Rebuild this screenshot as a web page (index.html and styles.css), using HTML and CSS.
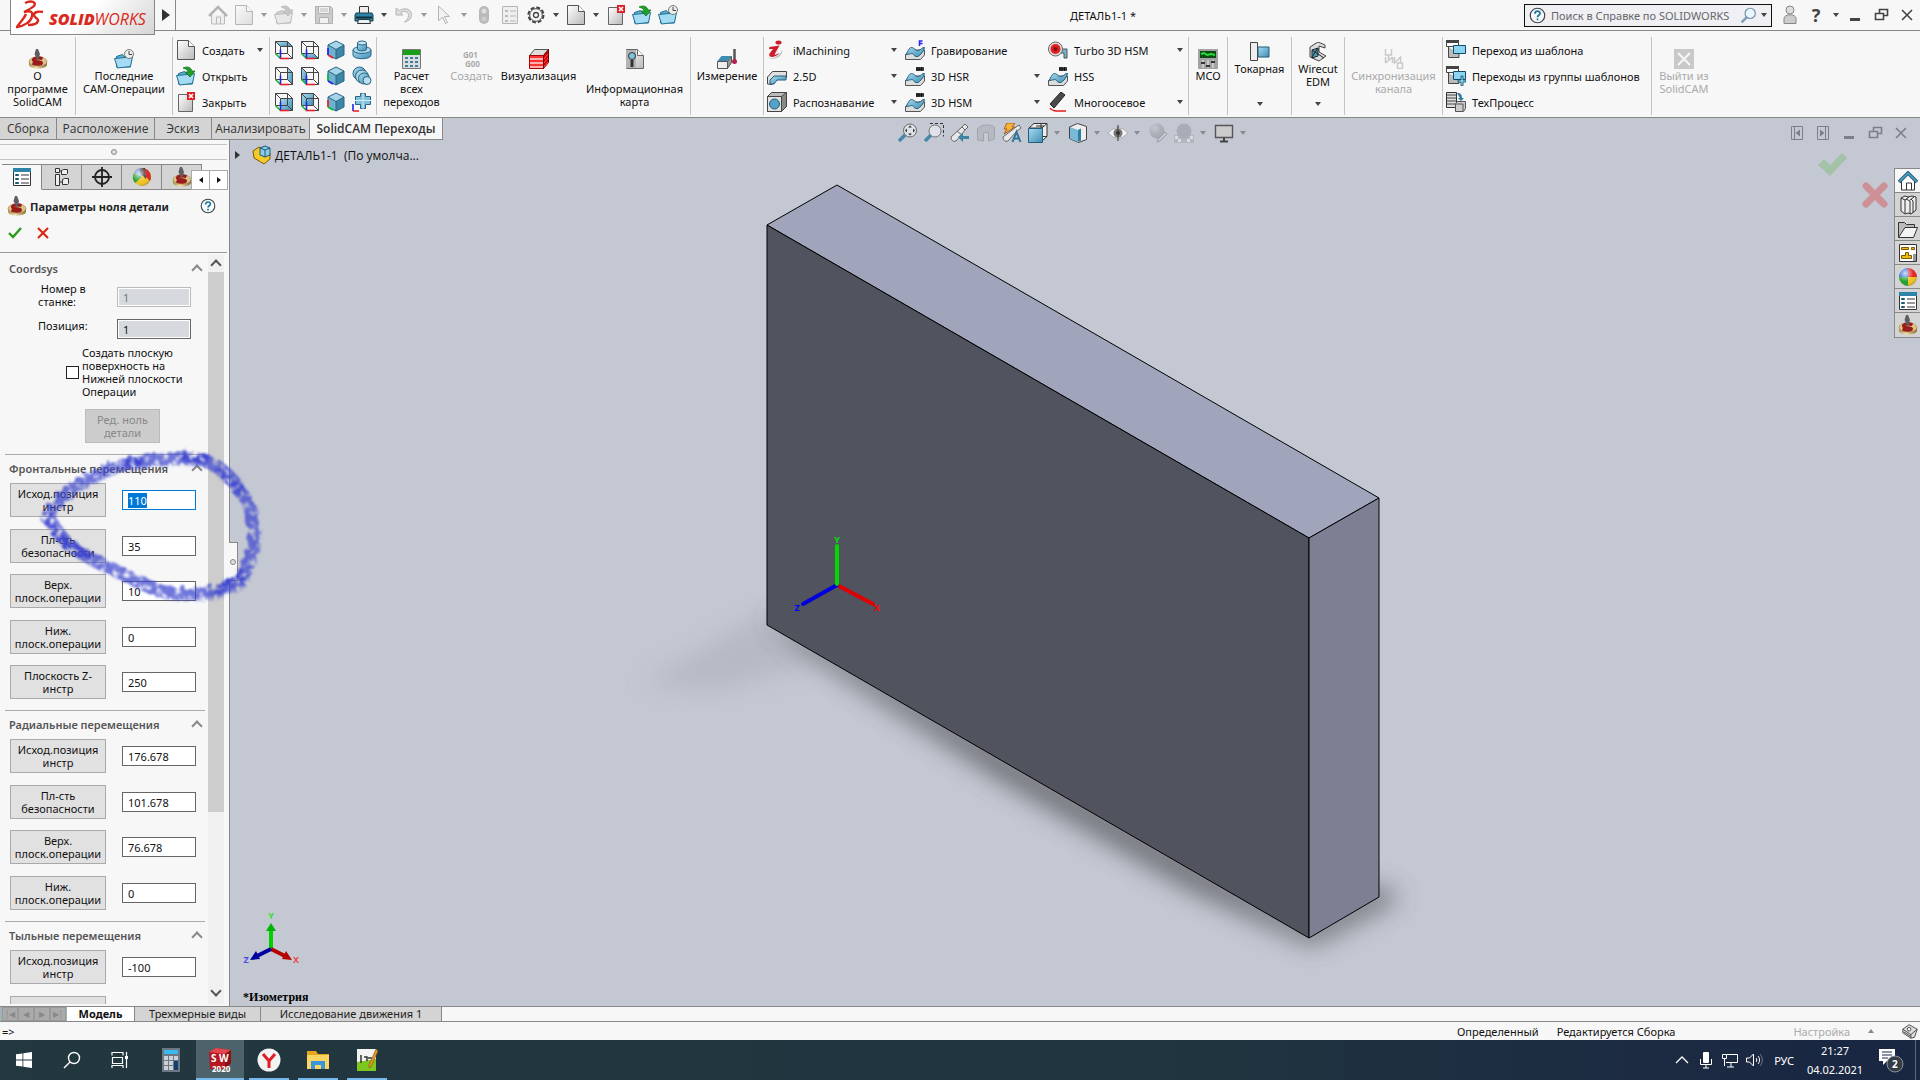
FILE: index.html
```html
<!DOCTYPE html>
<html lang="ru">
<head>
    <meta charset="UTF-8">
    <meta name="viewport" content="width=device-width, initial-scale=1.0">
    <title>ДЕТАЛЬ1-1 *</title>
    <link rel="stylesheet" href="styles.css">
</head>
<body>
    <!-- icon set, every symbol is 20x20 -->
    <svg class="defs" width="0" height="0" aria-hidden="true">
        <defs>
            <linearGradient id="blue" x1="0" y1="0" x2="1" y2="1"><stop offset="0" stop-color="#a8dbf0"/><stop offset="1" stop-color="#3d8db3"/></linearGradient>
            <linearGradient id="grey" x1="0" y1="0" x2="1" y2="1"><stop offset="0" stop-color="#fff"/><stop offset="1" stop-color="#b9b9b9"/></linearGradient>
            <linearGradient id="gold" x1="0" y1="0" x2="1" y2="0"><stop offset="0" stop-color="#a98d4c"/><stop offset=".4" stop-color="#f3e3b0"/><stop offset="1" stop-color="#8a6c33"/></linearGradient>
            <radialGradient id="shine" cx=".35" cy=".3" r=".8"><stop offset="0" stop-color="#fff" stop-opacity=".8"/><stop offset=".6" stop-color="#fff" stop-opacity="0"/><stop offset="1" stop-color="#000" stop-opacity=".35"/></radialGradient>
        </defs>
        <symbol id="i-doc" viewBox="0 0 20 20"><path d="M1.500.5h11l6 6v13h-17z" fill="url(#grey)" stroke="#555"/><path d="M12.500.5v6h6" fill="#fff" stroke="#555"/></symbol>
        <symbol id="i-docx" viewBox="0 0 20 20"><path d="M2.500 2.500h14v17h-14z" fill="url(#grey)" stroke="#666"/><path d="M11 0h8v8h-8z" fill="#e01b24"/><path d="M13 2l4 4m0-4l-4 4" stroke="#fff" stroke-width="1.600"/></symbol>
        <symbol id="i-folder" viewBox="0 0 20 20"><path d="M2.500 18V7.500l6-2 1.500 2h6.500V18z" fill="#5fb0d2" stroke="#1f6f93"/><path d="M.5 9.500l16-1.500 2-.5-2 10-13 1.500z" fill="#a5dcf4" stroke="#1f6f93"/></symbol>
        <symbol id="i-open" viewBox="0 0 20 20"><use href="#i-folder"/><path d="M7 2c4-2 8-1 9 3h3l-5 6-5-5h3c0-2-2-3-5-4z" fill="#1fa02a" stroke="#116b18" stroke-width=".7"/></symbol>
        <symbol id="i-recent" viewBox="0 0 20 20"><use href="#i-folder"/><circle cx="15" cy="5" r="4.500" fill="#eee" stroke="#777"/><path d="M15 2v3.500h3" fill="none" stroke="#444"/></symbol>
        <symbol id="i-home" viewBox="0 0 20 20"><path d="M3.500 10v9h13v-9" fill="#eee" stroke="#bbb"/><path d="M1 11l9-9 9 9" fill="none" stroke="#b4b4b4" stroke-width="2.500"/><path d="M8.500 19v-7h4v7" fill="none" stroke="#bbb"/></symbol>
        <symbol id="i-save" viewBox="0 0 20 20"><path d="M1.500 1.500h15l2 2v15h-17z" fill="#ccc" stroke="#b0b0b0"/><path d="M4.500 1.500h11v7h-11zM5.500 12.500h9v6h-9z" fill="#f2f2f2" stroke="#b0b0b0"/><path d="M6 4h8M6 6h8" stroke="#bbb"/></symbol>
        <symbol id="i-print" viewBox="0 0 20 20"><path d="M5.500 8V1.500h9V8" fill="#eee" stroke="#333"/><path d="M2 8h16l1 2v6H1v-6z" fill="#2e83a8" stroke="#163f52"/><path d="M2 12.500h16" stroke="#0f2e3d" stroke-width="2"/><path d="M4.500 14.500h11l1 4h-13z" fill="#e6f3f8" stroke="#333"/></symbol>
        <symbol id="i-undo" viewBox="0 0 20 20"><path d="M2 3v7h7L6.500 7.500c4-2 8-1 8 3 0 3-2 5-4 6.500 5-1 7-4 7-7.500 0-5.500-7-7.500-12-4z" fill="#ddd" stroke="#b5b5b5"/></symbol>
        <symbol id="i-pointer" viewBox="0 0 20 20"><path d="M4.500 1v15l4-4 3 6.500 2-1-3-6h5z" fill="#f3f3f3" stroke="#b5b5b5"/></symbol>
        <symbol id="i-light" viewBox="0 0 20 20"><rect x="5" y="1" width="10" height="18" rx="5" fill="#b9b9b9"/><circle cx="10" cy="6" r="2.500" fill="#ddd"/><circle cx="10" cy="14" r="2.500" fill="#ccc"/></symbol>
        <symbol id="i-props" viewBox="0 0 20 20"><path d="M2.500 1.500h15v17h-15z" fill="#efefef" stroke="#b5b5b5"/><path d="M5 5h3v2H5zM5 10h3v2H5zM5 15h3v2H5z" fill="#bbb"/><path d="M10 6h6M10 11h6M10 16h6" stroke="#b5b5b5"/></symbol>
        <symbol id="i-gear" viewBox="0 0 20 20"><circle cx="10" cy="10" r="7.500" fill="none" stroke="#444" stroke-width="2" stroke-dasharray="3.900 2"/><circle cx="10" cy="10" r="6.300" fill="#f7f7f7" stroke="#444"/><circle cx="10" cy="10" r="2.500" fill="none" stroke="#444" stroke-width="1.300"/></symbol>
        <symbol id="i-help" viewBox="0 0 20 20"><circle cx="10" cy="10" r="8.500" fill="#f4fafc" stroke="#444" stroke-width="1.400"/><path d="M7 8c0-4 6-4 6-.5 0 2.200-3 2.200-3 4.500M10 13.500v2" fill="none" stroke="#1c7396" stroke-width="2"/></symbol>
        <symbol id="i-lens" viewBox="0 0 20 20"><path d="M8 12l-6 6" stroke="#7d9fb8" stroke-width="3"/><circle cx="12" cy="7.500" r="6" fill="#eaf6fd" stroke="#7393a9" stroke-width="1.400"/></symbol>
        <symbol id="i-user" viewBox="0 0 20 20"><circle cx="10" cy="5" r="4" fill="#ddd" stroke="#888"/><path d="M4 18.500v-5c0-5 12-5 12 0v5z" fill="#ccc" stroke="#888"/></symbol>
        <symbol id="i-cam" viewBox="0 0 20 20"><path d="M1 12.500v3c0 5.500 18 5.500 18 0v-3z" fill="url(#gold)"/><ellipse cx="10" cy="12.500" rx="9" ry="4.700" fill="#dcc489" stroke="#9c8144" stroke-width=".6"/><path d="M14.500 9.700c-5-2-11 .3-8.500 2 2 1.500 7 .7 7.500 2 0 1.800-5 2-9 .3" fill="none" stroke="#9b1c1c" stroke-width="3"/><path d="M8 0h2l2 5-1.500 5L10 12 7.500 7 6.500 5z" fill="#5b5f63"/></symbol>
        <symbol id="i-wire" viewBox="0 0 20 20"><path d="M1.500 1.500h12v12h-12zM6.500 6.500h12v12h-12zM1.500 1.500l5 5M13.500 1.500l5 5M13.500 13.500l5 5" fill="none" stroke="#444"/><path d="M1.500 13.500l5 5" stroke="#18b22c" stroke-width="1.600"/><path d="M6.500 18.500v-9" stroke="#2222e6" stroke-width="1.600"/><path d="M6 18.500h9" stroke="#e6202c" stroke-width="1.600"/></symbol>
        <symbol id="i-cube" viewBox="0 0 20 20"><path d="M10 1l8 4-8 4.500L2 5z" fill="#a6d5e8"/><path d="M2 5l8 4.500V19l-8-4z" fill="#6fb2cf"/><path d="M18 5l-8 4.500V19l8-4z" fill="#3c86a8"/><path d="M10 1l8 4v10l-8 4-8-4V5zM2 5l8 4.500L18 5M10 9.500V19" fill="none" stroke="#2a6582"/></symbol>
        <symbol id="i-boss" viewBox="0 0 20 20"><path d="M1 10v5c0 5 18 5 18 0v-5z" fill="url(#blue)" stroke="#2a6582"/><ellipse cx="10" cy="10" rx="9" ry="3.500" fill="#a6d5e8" stroke="#2a6582"/><path d="M5.500 3v6c0 2.500 9 2.500 9 0V3z" fill="url(#blue)" stroke="#2a6582"/><ellipse cx="10" cy="3" rx="4.500" ry="2" fill="#c4e6f3" stroke="#2a6582"/></symbol>
        <symbol id="i-disc" viewBox="0 0 20 20"><circle cx="7.500" cy="7.500" r="6.500" fill="url(#blue)" stroke="#2a6582"/><circle cx="10" cy="10.500" r="6.500" fill="#a6d5e8" stroke="#2a6582"/><circle cx="12" cy="12.500" r="5.500" fill="url(#blue)" stroke="#2a6582"/><circle cx="15" cy="14.500" r="4" fill="#b8e0ef" stroke="#2a6582"/></symbol>
        <symbol id="i-plus" viewBox="0 0 20 20"><path d="M3.500 4.500h5v-3h5v3h5v8h-5v4h-5v-4h-5z" fill="#7fc0da" stroke="#2a6582"/><path d="M11 1v16M3 8.500h16" stroke="#d8eff7"/><path d="M1 12v7" stroke="#22e" stroke-width="1.600"/><path d="M1 19h6" stroke="#e22" stroke-width="1.600"/></symbol>
        <symbol id="i-calc" viewBox="0 0 20 20"><path d="M.5.5h18v19H.5z" fill="#ddd" stroke="#777"/><path d="M1 1h17v5H1z" fill="#17a017"/><path d="M3 8h3v2H3zM8 8h3v2H8zM13 8h3v2h-3zM3 12h3v2H3zM8 12h3v2H8zM13 12h3v2h-3zM3 16h3v2H3zM8 16h3v2H8zM13 16h3v2h-3z" fill="#3d7f9f"/></symbol>
        <symbol id="i-viz" viewBox="0 0 20 20"><path d="M.5 6.500l5-6h14l-5 6z" fill="#ddd" stroke="#555"/><path d="M.5 6.500h14v13H.5z" fill="#f33" stroke="#a00"/><path d="M14.500 6.500l5-6v13l-5 6z" fill="#c00" stroke="#700"/><path d="M1 10h13M1 14h13M1 18h13" stroke="#ffd9d9" stroke-width="1.500"/><path d="M15 10l4-5M15 14l4-5M15 18l4-5" stroke="#f55"/></symbol>
        <symbol id="i-info" viewBox="0 0 20 20"><path d="M1.500.5h11l6 6v13h-17z" fill="url(#grey)" stroke="#666"/><path d="M1 1h10v18H1z" fill="#b4b4b4"/><path d="M12.500.5v6h6" fill="#fff" stroke="#666"/><circle cx="7" cy="7" r="3.500" fill="#7fc2df" stroke="#333"/><path d="M7 11v7" stroke="#333" stroke-width="3"/></symbol>
        <symbol id="i-measure" viewBox="0 0 20 20"><path d="M.5 12.500h10v7H.5z" fill="#eee" stroke="#555"/><path d="M.5 12l4-5h10l-4 5z" fill="#3d8db3"/><path d="M10.500 12.500l4-5v6l-4 6z" fill="#999" stroke="#555"/><path d="M17.500 0v11" stroke="#555" stroke-width="2.500"/><circle cx="17.500" cy="12.500" r="2.500" fill="#b2204e"/></symbol>
        <symbol id="i-imach" viewBox="0 0 20 20"><path d="M0 18.500c7 1 13-3 15.500-9 0 7-7 11-15.500 9z" fill="#bbb"/><ellipse cx="11.500" cy="2.500" rx="3" ry="2" fill="#cc1d2c"/><path d="M2.500 7l10-1.500-5 9c1 .5 3-.5 5-1.500-4 5-12 5.500-10 .5L6 9H2z" fill="#cc1d2c"/></symbol>
        <symbol id="i-slot" viewBox="0 0 20 20"><path d="M.5 18V11l5-5.500h14v6l-3 2H8.500L5 18.500z" fill="#e1e1e1" stroke="#444"/><path d="M3 18v-4l4-4h12v4h-9l-3 4z" fill="url(#blue)" stroke="#235d79"/></symbol>
        <symbol id="i-recog" viewBox="0 0 20 20"><path d="M.5 4.500l4-4h15v14l-5 5H.5z" fill="#bbb" stroke="#444"/><path d="M.5 4.500h14v15H.5z" fill="#e2e2e2" stroke="#444"/><path d="M14.500 4.500l5-4v14l-5 5z" fill="#888" stroke="#444"/><circle cx="7.500" cy="12" r="5" fill="#57a3c6" stroke="#215a76"/></symbol>
        <symbol id="i-surf" viewBox="0 0 20 20"><path d="M.5 15l5-5h14v5l-4 4.500H.5z" fill="#ddd" stroke="#555"/><path d="M.5 14.500c2-1 3-7 6-7s4 4 7 3 3-3 6-3c-1 4-3 6-5 8s-5 1-6-1-4 0-8 0z" fill="url(#blue)" stroke="#235d79"/></symbol>
        <symbol id="i-surft" viewBox="0 0 20 20"><use href="#i-surf"/><path d="M11 1h8v4h-8z" fill="#555"/><path d="M12 1v4M14 1v4M16.500 1v4M11 3h8" stroke="#111"/></symbol>
        <symbol id="i-surfe" viewBox="0 0 20 20"><use href="#i-surf"/><path d="M14.500 6V1h3M14.500 3.500h3" fill="none" stroke="#22f" stroke-width="1.500"/></symbol>
        <symbol id="i-turbo" viewBox="0 0 20 20"><path d="M14 9h5v9h-3v-5h-4z" fill="#6fb3d0" stroke="#555"/><circle cx="7.500" cy="9" r="7" fill="#ddd" stroke="#666"/><circle cx="7.500" cy="9" r="5" fill="#e02020"/><circle cx="7.500" cy="9" r="2" fill="#801010"/></symbol>
        <symbol id="i-multi" viewBox="0 0 20 20"><path d="M2 12L13 0l4 3L6 16z" fill="#4a4a4a" stroke="#222"/><path d="M2 16c2 4 8 3 16 3" fill="none" stroke="#e01c1c" stroke-width="1.500"/></symbol>
        <symbol id="i-mco" viewBox="0 0 20 20"><path d="M0 0h20v20H0z" fill="#a3a3a3"/><path d="M2 2h16v7H2z" fill="#0d4a16"/><path d="M3 5l3-1 3 2 4-1 4 1" fill="none" stroke="#28e03a" stroke-width="2"/><path d="M5 11v8M10 11v8M15 11v8" stroke="#eee"/><path d="M3 14h4M8 17h4M13 13h4" stroke="#333" stroke-width="2"/></symbol>
        <symbol id="i-turn" viewBox="0 0 20 20"><path d="M.5.5h7v18h-7z" fill="#eee" stroke="#444"/><path d="M8 5h11v10H8z" fill="url(#blue)" stroke="#235d79"/></symbol>
        <symbol id="i-edm" viewBox="0 0 20 20"><path d="M2 5l8-5 7 3v3l-6-2v6l7 4-7 5-9-4z" fill="#ddd" stroke="#444"/><path d="M4 8l6-2v8l-6 2z" fill="#4d9cc0" stroke="#222"/><path d="M4 8l12 8M10 6l-6 9" stroke="#222"/></symbol>
        <symbol id="i-sync" viewBox="0 0 20 20"><path d="M1.500 0v6h6V0M4.500 6v6M1.500 8v6M8.500 8v6M1.500 14l7-6M10.500 8v6l6-6v6M13.500 14v5.500h5v-5.500z" fill="none" stroke="#c9c9c9" stroke-width="1.500"/></symbol>
        <symbol id="i-tpl" viewBox="0 0 20 20"><path d="M.5.5h12v6H.5z" fill="#fff" stroke="#444"/><path d="M0 0h13v3H0z" fill="#444"/><path d="M2.500 7v10.500H13v-4" fill="#bbb" stroke="#444"/><path d="M7.500 5.500h12v8h-12z" fill="#8bd4f2" stroke="#124c68"/></symbol>
        <symbol id="i-tpl2" viewBox="0 0 20 20"><use href="#i-tpl"/><path d="M15 10h2v4h3v2h-3v4h-2v-4h-3v-2h3z" fill="#8bd4f2" stroke="#124c68" stroke-width=".8"/></symbol>
        <symbol id="i-tech" viewBox="0 0 20 20"><path d="M.5.5h10v15H.5z" fill="#ddd" stroke="#333"/><path d="M1 3h9M1 6h9M1 9h9M1 12h9" stroke="#444"/><path d="M11 1c4 0 5 2 5 5h2l-3 3-3-3h2" fill="#2e7d9f"/><path d="M9.500 11.500l2-2h8v7l-2 3h-8z" fill="#ccc" stroke="#555"/><path d="M10 12h7v7" fill="none" stroke="#555"/></symbol>
        <symbol id="i-exit" viewBox="0 0 20 20"><path d="M0 0h20v20H0z" fill="#c9c9c9"/><path d="M4 4l12 12M16 4L4 16" stroke="#f7f7f7" stroke-width="2"/></symbol>
        <!-- view toolbar -->
        <symbol id="i-fit" viewBox="0 0 20 20"><path d="M7 12l-6 6" stroke="#4788a8" stroke-width="3.500"/><circle cx="12" cy="7.500" r="6.500" fill="#dfe3e9" stroke="#666"/><path d="M12 2.500l2 2h-4zM12 12.500l2-2h-4zM7 7.500l2-2v4zM17 7.500l-2-2v4z" fill="#333"/></symbol>
        <symbol id="i-area" viewBox="0 0 20 20"><path d="M6 .5h13.500v13" fill="none" stroke="#333" stroke-dasharray="3 2"/><path d="M7 12l-6 6" stroke="#4788a8" stroke-width="3.500"/><circle cx="11" cy="8" r="6" fill="#dfe3e9" stroke="#777"/></symbol>
        <symbol id="i-prev" viewBox="0 0 20 20"><path d="M1 14L12 4l3-3 3 3-3 3-9 11c-3 1-5-1-5-4z" fill="#e8e8e8" stroke="#666"/><path d="M7 8l5 4M12 4l3 3" stroke="#666"/><path d="M8 14l5-4v3h6v3h-6v3z" fill="#3e84a5"/></symbol>
        <symbol id="i-sect" viewBox="0 0 20 20"><path d="M1.500 6c3-5 13-5 17-2v12l-6 2V9l-5 1v8l-6-1z" fill="#b5b9c2" stroke="#a0a4ad"/></symbol>
        <symbol id="i-dyn" viewBox="0 0 20 20"><path d="M1 14L14 4l3-2 2 3-4 3-9 10c-3 1-5-1-5-4z" fill="#e8e8e8" stroke="#666"/><path d="M5 0h8l-3 4h3L2 11l3-5H2z" fill="#f3b53a" stroke="#b35a12"/><path d="M10.500 19l4-10 4 10M12 15.500h5" fill="none" stroke="#2e7599" stroke-width="2"/></symbol>
        <symbol id="i-orient" viewBox="0 0 20 20"><path d="M1 5l5-4.500h13v13L14 18V5z" fill="#eee" stroke="#333"/><path d="M14 5l5-4.500M13 .5v13h6M8 3h8" fill="none" stroke="#333"/><path d="M.5 5.500h14v14H.5z" fill="url(#blue)" stroke="#235d79"/></symbol>
        <symbol id="i-style" viewBox="0 0 20 20"><path d="M1.500 4l8-3.500 9 3v13l-8 3-9-4z" fill="#eee" stroke="#444"/><path d="M2 4l8 3v12l-8-3.500z" fill="#79bbd6"/><path d="M10 7l3-1.500v12L10 19z" fill="#2e7ea3"/></symbol>
        <symbol id="i-eye" viewBox="0 0 20 20"><path d="M0 10Q10-1 20 10 10 21 0 10z" fill="#f3f3f3" stroke="#aaa"/><circle cx="10" cy="10" r="4.500" fill="#777"/><circle cx="10" cy="10" r="2" fill="#333"/><path d="M10 2v16" stroke="#333"/></symbol>
        <symbol id="i-ball" viewBox="0 0 20 20"><circle cx="9" cy="8" r="7.500" fill="#a9adb7"/><circle cx="9" cy="8" r="7.500" fill="url(#shine)" opacity=".4"/><path d="M17 9l2 2-7 7-3 1 1-3z" fill="#c4c7cf" stroke="#9a9ea8"/></symbol>
        <symbol id="i-ball2" viewBox="0 0 20 20"><path d="M0 12h20v8H0z" fill="#b4b7bf"/><path d="M1 13h3v3H1zM4 16h3v3H4zM13 16h3v3h-3zM16 13h3v3h-3z" fill="#d8dae0"/><circle cx="10" cy="8" r="7.500" fill="#a9adb7"/></symbol>
        <symbol id="i-mon" viewBox="0 0 20 20"><path d="M1.500 2.500h17v12h-17z" fill="#ccc" stroke="#555" stroke-width="1.400"/><path d="M10 15v3M6 18.500h8" stroke="#444" stroke-width="2"/></symbol>
        <!-- panel and task pane -->
        <symbol id="i-list" viewBox="0 0 20 20"><path d="M1.500 1.500h17v17h-17z" fill="#fff" stroke="#333"/><path d="M1 1h18v4H1z" fill="#2e83a8"/><path d="M3.500 7.500h3v1h-3zM3.500 11.500h3v1h-3zM3.500 15.500h3v1h-3z" fill="#8cc" stroke="#1c5877"/><path d="M9 8h8M9 12h8M9 16h8" stroke="#333"/></symbol>
        <symbol id="i-conf" viewBox="0 0 20 20"><path d="M3.500 1.500h4v4h-4zM3.500 7.500h4v11h-4zM7.500 4h3M7.500 15h5" fill="#eee" stroke="#333"/><path d="M9.500 3.500l2-1h4v4l-1 1h-5zM10.500 12.500l2-1h4v5l-1 1h-5z" fill="#eee" stroke="#333"/></symbol>
        <symbol id="i-target" viewBox="0 0 20 20"><circle cx="10" cy="10" r="7" fill="none" stroke="#222" stroke-width="1.800"/><path d="M10 0v20M0 10h20" stroke="#222" stroke-width="1.800"/></symbol>
        <symbol id="i-rgb" viewBox="0 0 20 20"><path d="M10 10V1a9 9 0 0 1 9 9z" fill="#e01f1f"/><path d="M10 10h9a9 9 0 0 1-9 9z" fill="#f1c21c"/><path d="M10 10v9a9 9 0 0 1-9-9z" fill="#1d9e28"/><path d="M10 10H1a9 9 0 0 1 9-9z" fill="#1f58cf"/><circle cx="10" cy="10" r="9" fill="url(#shine)"/></symbol>
        <symbol id="i-app" viewBox="0 0 20 20"><circle cx="10" cy="10" r="9" fill="#f1c21c"/><path d="M10 10L3 16A9 9 0 0 1 2 6z" fill="#1d9e28"/><path d="M10 10L2 6a9 9 0 0 1 8-5z" fill="#4f86d8"/><path d="M10 1a9 9 0 0 1 8 13L8 4z" fill="#d92020"/><path d="M8 2l5-1 1 11-7-7z" fill="#222"/><circle cx="10" cy="10" r="9" fill="url(#shine)"/></symbol>
        <symbol id="i-house" viewBox="0 0 20 20"><path d="M3.500 9v10h13V9" fill="#fff" stroke="#333"/><path d="M1 11l9-9 9 9" fill="none" stroke="#235d79" stroke-width="3.500"/><path d="M1.500 10.500L10 2l8.500 8.500" fill="none" stroke="#4fa3c7" stroke-width="1.500"/><path d="M8.500 19v-7h5v7" fill="none" stroke="#333"/></symbol>
        <symbol id="i-books" viewBox="0 0 20 20"><path d="M3 3l4-2 3 1 4-1 4 1v13l-5 4-3-1-3 1-4-3z" fill="#eee" stroke="#333"/><path d="M3 3l4 2v13M7 5l4-3M8 4l4 2v13M12 5l4-3M13 4l2 2v12" fill="none" stroke="#333"/></symbol>
        <symbol id="i-dir" viewBox="0 0 20 20"><path d="M.5 18V3.500h6l2 2h8V9" fill="#bbb" stroke="#333"/><path d="M.5 18.500L7 8.500h12.500l-4 10z" fill="#f3f3f3" stroke="#333"/></symbol>
        <symbol id="i-pal" viewBox="0 0 20 20"><path d="M1.500 1.500h17v17h-17z" fill="#fff" stroke="#333"/><path d="M3.500 4.500h7v2h-7zM13.500 4.500h3v2h-3zM7.500 9.500h3v3h3v3h-10v-3h4z" fill="#f1b90f" stroke="#7a5a00"/><path d="M15 11h3v7h-3z" fill="#999"/></symbol>
        <symbol id="i-part" viewBox="0 0 20 20"><path d="M1 6l6-4 4 2v6l7-2v6l-6 5L2 13z" fill="#f4c92a" stroke="#7a5a00"/><path d="M8 3l5-2 5 2v7l-5 2-5-2z" fill="#8ccbe4" stroke="#1c5877"/><path d="M8 3l5 2 5-2M13 5v7" fill="none" stroke="#1c5877"/></symbol>
        <symbol id="w-min" viewBox="0 0 20 20"><path d="M5 14.500h10" stroke="currentColor" stroke-width="3"/></symbol>
        <symbol id="w-rest" viewBox="0 0 20 20"><path d="M4.500 8.500h8v6h-8zM8.500 8V4.500h8v6H13" fill="none" stroke="currentColor" stroke-width="1.600"/></symbol>
        <symbol id="w-close" viewBox="0 0 20 20"><path d="M5 5l10 10M15 5L5 15" stroke="currentColor" stroke-width="1.600"/></symbol>
        <symbol id="w-left" viewBox="0 0 20 20"><path d="M4.500 3.500h11v13h-11zM7.500 3.500v13" fill="none" stroke="currentColor"/><path d="M13 6.500v7L8.500 10z" fill="currentColor"/></symbol>
        <symbol id="w-right" viewBox="0 0 20 20"><path d="M4.500 3.500h11v13h-11zM12.500 3.500v13" fill="none" stroke="currentColor"/><path d="M7 6.500v7l4.500-3.500z" fill="currentColor"/></symbol>
    </svg>

    <header class="titlebar">
        <div class="logo">
            <svg width="28" height="30" viewBox="0 0 28 30" aria-hidden="true"><path d="M9 3c6-3 12-1 9 3-2 2-6 4-10 6 7-2 9 0 8 4-1 6-8 10-15 11 3-5 7-8 9-13M27 12c-5-1-9 0-9 3 0 3 5 3 4 6-1 3-6 4-10 4" fill="none" stroke="#da291c" stroke-width="2.400"/></svg>
            <span><b>SOLID</b>WORKS</span>
        </div>
        <button class="logo-arrow" aria-label="Меню"></button>
        <div class="quick">
            <button class="home" aria-label="Домой"><svg class="ic"><use href="#i-home"/></svg></button>
            <button class="dd off" aria-label="Создать"><svg class="ic faded"><use href="#i-doc"/></svg><i class="caret"></i></button>
            <button class="dd off" aria-label="Открыть"><svg class="ic faded"><use href="#i-open"/></svg><i class="caret"></i></button>
            <button class="dd off" aria-label="Сохранить"><svg class="ic"><use href="#i-save"/></svg><i class="caret"></i></button>
            <button class="dd" aria-label="Печать"><svg class="ic"><use href="#i-print"/></svg><i class="caret"></i></button>
            <button class="dd off" aria-label="Отменить"><svg class="ic"><use href="#i-undo"/></svg><i class="caret"></i></button>
            <button class="dd off" aria-label="Выбрать"><svg class="ic"><use href="#i-pointer"/></svg><i class="caret"></i></button>
            <button class="home" aria-label="Перестроить"><svg class="ic"><use href="#i-light"/></svg></button>
            <button class="home" aria-label="Свойства файла"><svg class="ic"><use href="#i-props"/></svg></button>
            <button class="dd" aria-label="Параметры"><svg class="ic"><use href="#i-gear"/></svg><i class="caret"></i></button>
            <button class="dd" aria-label="Новая деталь"><svg class="ic"><use href="#i-doc"/></svg><i class="caret"></i></button>
            <button class="home" aria-label="Закрыть деталь"><svg class="ic"><use href="#i-docx"/></svg></button>
            <button class="home" aria-label="Открыть деталь"><svg class="ic"><use href="#i-open"/></svg></button>
            <button class="home" aria-label="Последние"><svg class="ic"><use href="#i-recent"/></svg></button>
        </div>
        <div class="doc-name">ДЕТАЛЬ1-1 *</div>
        <div class="search">
            <svg class="ic"><use href="#i-help"/></svg>
            <input type="text" placeholder="Поиск в Справке по SOLIDWORKS" aria-label="Поиск в Справке">
            <svg class="ic"><use href="#i-lens"/></svg>
            <i class="caret"></i>
        </div>
        <div class="win">
            <button aria-label="Вход"><svg class="ic"><use href="#i-user"/></svg></button>
            <button class="q">?</button>
            <button class="narrow" aria-label="Справка"><i class="caret"></i></button>
            <button aria-label="Свернуть"><svg class="ic"><use href="#w-min"/></svg></button>
            <button aria-label="Восстановить"><svg class="ic"><use href="#w-rest"/></svg></button>
            <button aria-label="Закрыть"><svg class="ic"><use href="#w-close"/></svg></button>
        </div>
    </header>

    <nav class="ribbon">
        <div class="group g-about"><button class="big"><svg class="ic"><use href="#i-cam"/></svg><span>О<br>программе<br>SolidCAM</span></button></div>
        <div class="group g-recent"><button class="big"><svg class="ic"><use href="#i-recent"/></svg><span>Последние<br>CAM-Операции</span></button></div>
        <div class="group g-file rows">
            <button class="small"><svg class="ic"><use href="#i-doc"/></svg>Создать<i class="caret"></i></button>
            <button class="small"><svg class="ic"><use href="#i-open"/></svg>Открыть</button>
            <button class="small"><svg class="ic"><use href="#i-docx"/></svg>Закрыть</button>
        </div>
        <div class="group g-views">
            <button aria-label="Сверху"><svg class="ic" viewBox="0 0 20 20"><path d="M1.500 1.500h12l5 5h-12z" fill="url(#blue)"/><use href="#i-wire"/></svg></button>
            <button aria-label="Снизу"><svg class="ic" viewBox="0 0 20 20"><path d="M1.500 13.500h12l5 5h-12z" fill="url(#blue)"/><use href="#i-wire"/></svg></button>
            <button aria-label="Изометрия"><svg class="ic" viewBox="0 0 20 20"><use href="#i-cube"/><path d="M2 8v7" stroke="#22e" stroke-width="1.600"/><path d="M2 15l5 3" stroke="#e22" stroke-width="1.600"/></svg></button>
            <button aria-label="Бобышка"><svg class="ic"><use href="#i-boss"/></svg></button>
            <button aria-label="Справа"><svg class="ic" viewBox="0 0 20 20"><path d="M13.500 1.500l5 5v12l-5-5z" fill="url(#blue)"/><use href="#i-wire"/></svg></button>
            <button aria-label="Слева"><svg class="ic" viewBox="0 0 20 20"><path d="M1.500 1.500l5 5v12l-5-5z" fill="url(#blue)"/><use href="#i-wire"/></svg></button>
            <button aria-label="Диметрия"><svg class="ic" viewBox="0 0 20 20"><use href="#i-cube"/><path d="M2 8v7" stroke="#1b3" stroke-width="1.600"/><path d="M2 15l5 3" stroke="#22e" stroke-width="1.600"/></svg></button>
            <button aria-label="Диски"><svg class="ic"><use href="#i-disc"/></svg></button>
            <button aria-label="Спереди"><svg class="ic" viewBox="0 0 20 20"><path d="M6.500 6.500h12v12h-12z" fill="url(#blue)"/><use href="#i-wire"/></svg></button>
            <button aria-label="Сзади"><svg class="ic" viewBox="0 0 20 20"><path d="M1.500 1.500h12v12h-12z" fill="url(#blue)"/><use href="#i-wire"/></svg></button>
            <button aria-label="Триметрия"><svg class="ic" viewBox="0 0 20 20"><use href="#i-cube"/><path d="M2 8v7" stroke="#e22" stroke-width="1.600"/><path d="M2 15l5 3" stroke="#1b3" stroke-width="1.600"/></svg></button>
            <button aria-label="Сечение"><svg class="ic"><use href="#i-plus"/></svg></button>
        </div>
        <div class="group g-calc">
            <button class="big"><svg class="ic"><use href="#i-calc"/></svg><span>Расчет<br>всех<br>переходов</span></button>
            <button class="big" disabled><svg class="ic gcode" viewBox="0 0 20 20"><text x="1" y="9">G01</text><text x="3" y="18">G00</text></svg><span>Создать</span></button>
            <button class="big"><svg class="ic"><use href="#i-viz"/></svg><span>Визуализация</span></button>
            <button class="big"><svg class="ic"><use href="#i-info"/></svg><span><br>Информационная<br>карта</span></button>
        </div>
        <div class="group g-measure"><button class="big"><svg class="ic"><use href="#i-measure"/></svg><span>Измерение</span></button></div>
        <div class="group g-ops">
            <div class="rows">
                <button class="small"><svg class="ic"><use href="#i-imach"/></svg>iMachining<i class="caret"></i></button>
                <button class="small"><svg class="ic"><use href="#i-slot"/></svg>2.5D<i class="caret"></i></button>
                <button class="small"><svg class="ic"><use href="#i-recog"/></svg>Распознавание<i class="caret"></i></button>
            </div>
            <div class="rows">
                <button class="small"><svg class="ic"><use href="#i-surfe"/></svg>Гравирование</button>
                <button class="small"><svg class="ic"><use href="#i-surft"/></svg>3D HSR<i class="caret"></i></button>
                <button class="small"><svg class="ic"><use href="#i-surft"/></svg>3D HSM<i class="caret"></i></button>
            </div>
            <div class="rows">
                <button class="small"><svg class="ic"><use href="#i-turbo"/></svg>Turbo 3D HSM<i class="caret"></i></button>
                <button class="small"><svg class="ic"><use href="#i-surft"/></svg>HSS</button>
                <button class="small"><svg class="ic"><use href="#i-multi"/></svg>Многоосевое<i class="caret"></i></button>
            </div>
        </div>
        <div class="group g-mco"><button class="big"><svg class="ic"><use href="#i-mco"/></svg><span>МСО</span></button></div>
        <div class="group g-turn"><button class="big menu"><svg class="ic"><use href="#i-turn"/></svg><span>Токарная</span><i class="caret"></i></button></div>
        <div class="group g-edm"><button class="big menu"><svg class="ic"><use href="#i-edm"/></svg><span>Wirecut<br>EDM</span><i class="caret"></i></button></div>
        <div class="group g-sync"><button class="big" disabled><svg class="ic"><use href="#i-sync"/></svg><span>Синхронизация<br>канала</span></button></div>
        <div class="group g-tpl rows">
            <button class="small"><svg class="ic"><use href="#i-tpl"/></svg>Переход из шаблона</button>
            <button class="small"><svg class="ic"><use href="#i-tpl2"/></svg>Переходы из группы шаблонов</button>
            <button class="small"><svg class="ic"><use href="#i-tech"/></svg>ТехПроцесс</button>
        </div>
        <div class="group g-exit"><button class="big" disabled><svg class="ic"><use href="#i-exit"/></svg><span>Выйти из<br>SolidCAM</span></button></div>
    </nav>

    <main class="work">
        <div class="tabs">
            <button class="t1">Сборка</button>
            <button class="t2">Расположение</button>
            <button class="t1">Эскиз</button>
            <button class="t2">Анализировать</button>
            <button class="on">SolidCAM Переходы</button>
        </div>

        <aside class="panel">
            <div class="grip"><i class="dot"></i></div>
            <div class="ptabs">
                <button class="on" aria-label="Свойства"><svg class="ic"><use href="#i-list"/></svg></button>
                <button aria-label="Конфигурации"><svg class="ic"><use href="#i-conf"/></svg></button>
                <button aria-label="Размеры"><svg class="ic"><use href="#i-target"/></svg></button>
                <button aria-label="Отображение"><svg class="ic"><use href="#i-app"/></svg></button>
                <button aria-label="SolidCAM"><svg class="ic"><use href="#i-cam"/></svg></button>
                <div class="scroll-tabs"><button class="left" aria-label="Назад"></button><button class="right" aria-label="Вперед"></button></div>
            </div>
            <div class="phead">
                <div class="ptitle"><svg class="ic"><use href="#i-cam"/></svg><h1>Параметры ноля детали</h1><svg class="ic help"><use href="#i-help"/></svg></div>
                <div class="okcancel">
                    <button aria-label="ОК"><svg width="14" height="12" viewBox="0 0 14 12"><path d="M1 6l4 4 8-9" fill="none" stroke="#2b9a1c" stroke-width="2.400"/></svg></button>
                    <button aria-label="Отмена"><svg width="12" height="12" viewBox="0 0 12 12"><path d="M1 1l10 10M11 1L1 11" stroke="#dc2716" stroke-width="2.200"/></svg></button>
                </div>
            </div>
            <div class="pbody">
                <div class="sections">
                    <section class="coord">
                        <h2>Coordsys<i class="up"></i></h2>
                        <div class="field"><label for="num">&nbsp;Номер в<br>станке:</label><input id="num" type="text" value="1" disabled></div>
                        <div class="field"><label for="pos">Позиция:</label><input id="pos" type="text" value="1" readonly></div>
                        <div class="check"><input type="checkbox" id="flat"><label for="flat">Создать плоскую<br>поверхность на<br>Нижней плоскости<br>Операции</label></div>
                        <button class="btn edit" disabled>Ред. ноль<br>детали</button>
                    </section>
                    <section>
                        <h2>Фронтальные перемещения<i class="up"></i></h2>
                        <div class="row"><button class="btn" id="f1">Исход.позиция<br>инстр</button><input type="text" class="sel" id="front" value="110" aria-labelledby="f1"></div>
                        <div class="row"><button class="btn" id="f2">Пл-сть<br>безопасности</button><input type="text" value="35" aria-labelledby="f2"></div>
                        <div class="row"><button class="btn" id="f3">Верх.<br>плоск.операции</button><input type="text" value="10" aria-labelledby="f3"></div>
                        <div class="row"><button class="btn" id="f4">Ниж.<br>плоск.операции</button><input type="text" value="0" aria-labelledby="f4"></div>
                        <div class="row"><button class="btn" id="f5">Плоскость Z-<br>инстр</button><input type="text" value="250" aria-labelledby="f5"></div>
                    </section>
                    <section>
                        <h2>Радиальные перемещения<i class="up"></i></h2>
                        <div class="row"><button class="btn" id="r1">Исход.позиция<br>инстр</button><input type="text" value="176.678" aria-labelledby="r1"></div>
                        <div class="row"><button class="btn" id="r2">Пл-сть<br>безопасности</button><input type="text" value="101.678" aria-labelledby="r2"></div>
                        <div class="row"><button class="btn" id="r3">Верх.<br>плоск.операции</button><input type="text" value="76.678" aria-labelledby="r3"></div>
                        <div class="row"><button class="btn" id="r4">Ниж.<br>плоск.операции</button><input type="text" value="0" aria-labelledby="r4"></div>
                    </section>
                    <section>
                        <h2>Тыльные перемещения<i class="up"></i></h2>
                        <div class="row"><button class="btn" id="b1">Исход.позиция<br>инстр</button><input type="text" value="-100" aria-labelledby="b1"></div>
                        <div class="row"><button class="btn" aria-label="Плоскость безопасности"></button></div>
                    </section>
                </div>
                <div class="sbar"><i class="up"></i><div class="thumb"></div><i class="up down"></i></div>
            </div>
        </aside>

        <div class="view">
            <svg class="scene" viewBox="230 118 1690 888" preserveAspectRatio="xMidYMid slice">
                <defs>
                    <filter id="soft" x="-20%" y="-20%" width="140%" height="140%"><feGaussianBlur stdDeviation="13"/></filter>
                </defs>
                <path d="M640 685L766 612 820 660 720 690z" fill="#7c7f88" opacity=".2" filter="url(#soft)"/>
                <path d="M766 612L1308 925 1379 885 1400 898 1312 945 1190 890 1000 780 800 648z" fill="#55575c" opacity=".8" filter="url(#soft)"/>
                <g stroke="#000" stroke-linejoin="round">
                    <path d="M767 225L837 185 1379 498 1309 538z" fill="#a1a5bc"/>
                    <path d="M767 225L1309 538V938L767 625z" fill="#51535e"/>
                    <path d="M1309 538L1379 498V897L1309 938z" fill="#7d8093"/>
                </g>
                <g fill="none" stroke-width="4" stroke-linecap="round">
                    <path d="M837 585L873 604" stroke="#e00000"/>
                    <path d="M837 585L803 604" stroke="#0000dc"/>
                    <path d="M837 584V546" stroke="#00d800"/>
                </g>
                <g class="axis">
                    <text x="837" y="543" fill="#00e000">Y</text><text x="797" y="611" fill="#0000ff">Z</text><text x="877" y="611" fill="#ff0000">X</text>
                    <text x="271" y="919" fill="#30e030">Y</text><text x="246" y="963" fill="#4a4ae8">Z</text><text x="296" y="963" fill="#e84a4a">X</text>
                </g>
                <path d="M271 949V930" stroke="#00d000" stroke-width="4"/><path d="M271 923l5 8h-10z" fill="#00b400"/>
                <path d="M271 949l14 7" stroke="#b40000" stroke-width="4"/><path d="M292 960l-10-1 4-8z" fill="#b40000"/>
                <path d="M271 949l-14 7" stroke="#0000a0" stroke-width="4"/><path d="M250 960l10-1-4-8z" fill="#0000a0"/>
                <path d="M1818 165l6-6 6 6 12-12 5 5-17 18z" fill="#a3c2a8"/>
                <path d="M1866 186l18 18M1884 186l-18 18" stroke="#cd9097" stroke-width="7" stroke-linecap="round"/>
            </svg>
            <div class="viewbar">
                <svg class="ic"><use href="#i-fit"/></svg>
                <svg class="ic"><use href="#i-area"/></svg>
                <svg class="ic"><use href="#i-prev"/></svg>
                <svg class="ic"><use href="#i-sect"/></svg>
                <svg class="ic"><use href="#i-dyn"/></svg>
                <svg class="ic menu"><use href="#i-orient"/></svg><i class="caret"></i>
                <svg class="ic menu"><use href="#i-style"/></svg><i class="caret"></i>
                <svg class="ic menu"><use href="#i-eye"/></svg><i class="caret"></i>
                <svg class="ic"><use href="#i-ball"/></svg>
                <svg class="ic menu"><use href="#i-ball2"/></svg><i class="caret"></i>
                <svg class="ic menu"><use href="#i-mon"/></svg><i class="caret"></i>
            </div>
            <div class="docwin">
                <svg class="ic"><use href="#w-left"/></svg>
                <svg class="ic"><use href="#w-right"/></svg>
                <svg class="ic"><use href="#w-min"/></svg>
                <svg class="ic"><use href="#w-rest"/></svg>
                <svg class="ic"><use href="#w-close"/></svg>
            </div>
            <div class="tree"><i class="tri"></i><svg class="ic"><use href="#i-part"/></svg><span>ДЕТАЛЬ1-1&nbsp; (По умолча...</span></div>
            <div class="taskpane">
                <button class="on" aria-label="Ресурсы"><svg class="ic"><use href="#i-house"/></svg></button>
                <button aria-label="Библиотека"><svg class="ic"><use href="#i-books"/></svg></button>
                <button aria-label="Проводник"><svg class="ic"><use href="#i-dir"/></svg></button>
                <button aria-label="Палитра видов"><svg class="ic"><use href="#i-pal"/></svg></button>
                <button aria-label="Внешний вид"><svg class="ic"><use href="#i-rgb"/></svg></button>
                <button aria-label="Настраиваемые свойства"><svg class="ic"><use href="#i-list"/></svg></button>
                <button aria-label="SolidCAM"><svg class="ic"><use href="#i-cam"/></svg></button>
            </div>
            <div class="flap"><i class="dot"></i></div>
            <div class="view-name">*Изометрия</div>
        </div>

        <!-- blue marker stroke -->
        <svg class="marker" viewBox="0 0 300 170" aria-hidden="true">
            <filter id="rough" x="-10%" y="-10%" width="120%" height="120%">
                <feTurbulence type="fractalNoise" baseFrequency=".16" numOctaves="3" seed="4" result="n"/>
                <feDisplacementMap in="SourceGraphic" in2="n" scale="10" result="d"/>
                <feColorMatrix in="n" type="matrix" values="0 0 0 0 0  0 0 0 0 0  0 0 0 0 0  0 0 0 3 -.6" result="m"/>
                <feComposite in="d" in2="m" operator="in" result="c"/>
                <feGaussianBlur in="c" stdDeviation=".8"/>
            </filter>
            <g fill="none" stroke="#3f46cf" stroke-linecap="round" filter="url(#rough)">
                <path d="M49 79C52 61 78 42 105 30 130 21 165 16 197 18 217 21 236 40 238 48" stroke-width="13" opacity=".75"/>
                <path d="M238 48C258 68 259 110 242 138" stroke-width="13" opacity=".75"/>
                <path d="M242 138C222 155 182 157 152 148 117 128 72 116 56 88L50 79" stroke-width="13" opacity=".75"/>
                <path d="M54 90l14 16 20 8M222 34l20 16M218 150l26-16M128 24l12-3M186 17l20 2" stroke-width="9"/>
            </g>
        </svg>
    </main>

    <div class="sheets">
        <div class="nav"><button disabled aria-label="Первый">|◀</button><button disabled aria-label="Назад">◀</button><button disabled aria-label="Вперед">▶</button><button disabled aria-label="Последний">▶|</button></div>
        <button class="on">Модель</button>
        <button class="s2">Трехмерные виды</button>
        <button class="s3">Исследование движения 1</button>
    </div>
    <div class="status">
        <span>=&gt;</span>
        <span class="st1">Определенный</span>
        <span class="st2">Редактируется Сборка</span>
        <span class="st3">Настройка</span>
        <i class="caret rise"></i>
        <svg class="ic" viewBox="0 0 20 20"><path d="M2 8l7-5 9 5-3 9-4 1-9-6z" fill="#ddd" stroke="#444"/><path d="M2 8l9 6 7-6M11 14v4M3 11l8 5" fill="none" stroke="#444"/><circle cx="9" cy="8" r="2" fill="#fff" stroke="#444"/></svg>
    </div>

    <footer class="taskbar">
        <button aria-label="Пуск"><svg width="16" height="16" viewBox="0 0 16 16"><path d="M0 2.300l6.500-.9v6.200H0zM7.300 1.300L16 0v7.600H7.300zM0 8.400h6.500v6.200L0 13.700zM7.300 8.400H16V16l-8.700-1.300z" fill="#fff"/></svg></button>
        <button aria-label="Поиск"><svg width="18" height="18" viewBox="0 0 18 18"><circle cx="11" cy="7" r="5.500" fill="none" stroke="#fff" stroke-width="1.400"/><path d="M7 11l-6 6" stroke="#fff" stroke-width="1.400"/></svg></button>
        <button class="view-btn" aria-label="Представление задач"><svg width="18" height="18" viewBox="0 0 18 18"><path d="M1 4.500V1.500h11v3M1.500 6.500h10v6h-10zM1 17v-2.500h11V17M15.500 1v16" fill="none" stroke="#fff" stroke-width="1.200"/><path d="M14 5h3v3h-3z" fill="#fff"/></svg></button>
        <button aria-label="Калькулятор"><svg width="18" height="24" viewBox="0 0 18 24"><path d="M0 0h18v24H0z" fill="#6d7783"/><path d="M2 2h14v4H2z" fill="#3bb8ee"/><path d="M2 8h4v4H2zM7 8h4v4H7zM12 8h4v4h-4zM2 13h4v4H2zM7 13h4v4H7zM2 18h4v4H2zM7 18h4v4H7z" fill="#cbd1d8"/><path d="M12 13h4v9h-4z" fill="#14406f"/></svg></button>
        <button class="run cur" aria-label="SolidWorks 2020"><svg width="24" height="26" viewBox="0 0 24 26"><path d="M1 5l7-4 15 2v13l-6 6H2z" fill="#b51820"/><path d="M1 5l7-4 15 2-6 4z" fill="#e2474d"/><path d="M17 7l6-4v13l-6 6z" fill="#8c0f16"/><text class="sw" x="3" y="15">S</text><text class="sw" x="11" y="15">W</text><text class="yr" x="4" y="25">2020</text></svg></button>
        <button class="run" aria-label="Яндекс"><svg width="24" height="24" viewBox="0 0 24 24"><circle cx="12" cy="12" r="11.500" fill="#f2f2f2"/><path d="M6 6l6 7 6-7M12 13v7" fill="none" stroke="#e01c24" stroke-width="3"/></svg></button>
        <button class="run" aria-label="Проводник"><svg width="24" height="22" viewBox="0 0 24 22"><path d="M1 2h9l2 3h11v15H1z" fill="#e5a51d"/><path d="M1 6h22v14H1z" fill="#fcd462"/><path d="M5 20v-8h14v8h-4v-4H9v4z" fill="#3896db"/></svg></button>
        <button class="run" aria-label="Notepad++"><svg width="22" height="24" viewBox="0 0 22 24"><path d="M1 1h19v22H1z" fill="#f4f4f4"/><path d="M1 14l19-3v12H1z" fill="#7cc81e"/><path d="M5 7v8M8 9h3v4M12 10h4" fill="none" stroke="#333" stroke-width="1.500"/><path d="M20 1l2 2-7 16-2 1v-3z" fill="#e2962a" stroke="#8a5410" stroke-width=".6"/></svg></button>
        <div class="tray">
            <svg class="ic" viewBox="0 0 20 20"><path d="M4 13l6-6 6 6" fill="none" stroke="#fff" stroke-width="1.300"/></svg>
            <svg class="ic" viewBox="0 0 20 20"><rect x="7" y="2" width="6" height="11" rx="1" fill="#fff"/><path d="M4.500 9v5.500h11V9M10 15v3M7 18h6" fill="none" stroke="#fff"/></svg>
            <svg class="ic" viewBox="0 0 20 20"><path d="M7 4.500h10.500v8H6M11 13v4M7 17h7M2.500 4.500h4v4h-4zM4.500 9v7" fill="none" stroke="#fff"/></svg>
            <svg class="ic" viewBox="0 0 20 20"><path d="M2.500 8h3l4-4v12l-4-4h-3zM12 8c1 1 1 3 0 4M14 6c2 2 2 6 0 8" fill="none" stroke="#fff"/><path d="M16 4c3 3 3 9 0 12" fill="none" stroke="#778"/></svg>
            <span class="lang">РУС</span>
            <span class="clock">21:27<br>04.02.2021</span>
            <svg class="notes" width="26" height="26" viewBox="0 0 26 26"><path d="M1 2h16v12H9l-4 4v-4H1z" fill="#fff"/><path d="M4 5h10M4 8h10M4 11h6" stroke="#1a2742"/><circle cx="17" cy="17" r="8" fill="#343c46" stroke="#8a929c"/><text x="14" y="21">2</text></svg>
        </div>
    </footer>
    <script>
        window.onload = function(){
            let front = document.getElementById("front");
            front.focus({preventScroll:true});
            front.select();
        }
    </script>
</body>
</html>
```
FILE: styles.css
```css
*{
    box-sizing:border-box;
}
body{
    margin:0;
    height:100vh;
    display:flex;
    flex-direction:column;
    overflow:hidden;
    font-family:"Noto Sans","Open Sans",sans-serif;
    font-size:11px;
    line-height:13px;
    color:#111;
    background:#f7f7f7;
}
button{
    border:none;
    background:none;
    padding:0;
    margin:0;
    font:inherit;
    color:inherit;
}
input{
    font:inherit;
    color:#111;
}
.defs{
    position:absolute;
}
.ic{
    width:20px;
    height:20px;
    flex:none;
    display:block;
}
.caret{
    border:3px solid transparent;
    border-top:4px solid #444;
    border-bottom:none;
    flex:none;
}
.off .caret{
    border-top-color:#999;
}
.faded{
    filter:grayscale(1);
    opacity:.4;
}
.dot{
    width:6px;
    height:6px;
    border-radius:50%;
    border:1px solid #888;
    background:#ddd;
}

/* title bar */
.titlebar{
    height:31px;
    flex:none;
    display:flex;
    align-items:center;
    border-bottom:1px solid #888;
    position:relative;
}
.logo{
    width:145px;
    height:35px;
    margin-left:10px;
    align-self:flex-start;
    flex:none;
    display:flex;
    align-items:center;
    gap:5px;
    padding:0 0 4px 5px;
    border:1px solid #888;
    border-top:none;
    background:linear-gradient(135deg,#fff 50%,#d5d5d5);
    color:#da291c;
    font:italic 16px "Open Sans",sans-serif;
    z-index:4;
}
.logo b{
    font-weight:800;
}
.logo span{
    margin-top:8px;
}
.logo-arrow{
    width:21px;
    height:30px;
    flex:none;
    border-right:1px solid #888;
    display:flex;
    align-items:center;
    padding-left:7px;
}
.logo-arrow::before{
    content:"";
    border:6px solid transparent;
    border-left:8px solid #333;
    border-right:none;
}
.quick{
    display:flex;
    align-items:center;
    margin-left:32px;
}
.home{
    width:26px;
}
.dd{
    width:40px;
    display:flex;
    align-items:center;
    gap:7px;
}
.doc-name{
    flex:1;
    text-align:center;
    padding-right:2px;
}
.search{
    width:248px;
    height:23px;
    display:flex;
    align-items:center;
    border:1px solid #111;
    background:#efeff4;
    padding:0 4px;
    gap:4px;
}
.search .ic{
    width:17px;
    height:17px;
}
.search input{
    flex:1;
    min-width:0;
    border:none;
    background:none;
    padding:0 0 0 1px;
}
.search input::placeholder{
    color:#666;
}
.win{
    display:flex;
    align-items:center;
    margin-left:5px;
    color:#444;
}
.win button{
    width:26px;
    display:flex;
    justify-content:center;
}
.win .q{
    font-size:18px;
    font-weight:bold;
    line-height:20px;
}
.win .narrow{
    width:13px;
}

/* ribbon */
.ribbon{
    height:87px;
    flex:none;
    display:flex;
    padding-top:6px;
    border-bottom:1px solid #888;
}
.group{
    height:78px;
    flex:none;
    display:flex;
    border-right:1px solid #c4c4c4;
}
.rows{
    display:flex;
    flex-direction:column;
}
.small{
    height:26px;
    display:flex;
    align-items:center;
    gap:6px;
    padding:0 6px 0 3px;
    text-align:left;
    white-space:nowrap;
}
.small .caret{
    margin-left:auto;
}
.big{
    flex:1;
    display:flex;
    flex-direction:column;
    align-items:center;
    padding-top:12px;
    white-space:nowrap;
}
.big:disabled{
    color:#aaa;
}
.big.menu{
    padding:5px 0 9px;
}
.big.menu .caret{
    margin-top:auto;
}
.gcode{
    overflow:visible;
    font-size:8px;
    font-weight:bold;
    fill:#aaa;
}
.g-about{width:76px;}
.g-recent{width:97px;}
.g-file{width:97px;}
.g-views{
    width:107px;
    display:grid;
    grid-template-columns:repeat(4,26px);
    align-items:center;
    padding-left:4px;
}
.g-calc{width:314px;}
.g-calc .big{flex:none;}
.g-calc .big:nth-child(1){width:69px;}
.g-calc .big:nth-child(2){width:51px;}
.g-calc .big:nth-child(3){width:83px;}
.g-calc .big:nth-child(4){width:109px;}
.g-measure{width:73px;}
.g-ops{
    width:425px;
}
.g-ops .rows{width:138px;}
.g-ops .rows + .rows{width:143px;}
.g-ops .small{padding-right:5px;}
.g-mco{width:39px;}
.g-turn{width:64px;}
.g-edm{width:53px;}
.g-sync{width:98px;}
.g-tpl{width:209px;}
.g-exit{
    width:64px;
    border:none;
}

/* command tabs, they lie over the view */
.work{
    flex:1;
    min-height:0;
    display:flex;
    position:relative;
}
.tabs{
    position:absolute;
    top:0;
    left:0;
    display:flex;
    z-index:3;
}
.tabs button{
    height:22px;
    font-family:"Open Sans",sans-serif;
    font-size:12px;
    background:#d4d4d4;
    border:1px solid #888;
    border-width:0 1px 1px 0;
    color:#333;
    white-space:nowrap;
}
.tabs .t1{width:57px;}
.tabs .t2{width:98px;}
.tabs .on{
    width:133px;
    background:#f7f7f7;
    font-weight:600;
}

/* property panel */
.panel{
    width:230px;
    flex:none;
    margin-top:22px;
    border-right:1px solid #888;
    background:#f7f7f7;
    display:flex;
    flex-direction:column;
}
.grip{
    height:20px;
    margin:0 2px 0 0;
    border-bottom:1px solid #c4c4c4;
    display:flex;
    justify-content:center;
    padding-top:9px;
}
.grip::before{
    content:"";
    position:absolute;
    left:0;
    width:227px;
    top:26px;
    border-top:1px solid #c4c4c4;
}
.ptabs{
    display:flex;
    height:26px;
    margin-top:4px;
    padding-left:2px;
    position:relative;
}
.ptabs > button{
    width:40px;
    background:#d4d4d4;
    border:1px solid #888;
    border-left:none;
    display:flex;
    align-items:center;
    justify-content:center;
}
.ptabs > .on{
    background:#f7f7f7;
    border-bottom-color:#f7f7f7;
}
.scroll-tabs{
    position:absolute;
    left:191px;
    bottom:0;
    display:flex;
}
.scroll-tabs button{
    width:19px;
    height:20px;
    margin-right:-1px;
    border:1px solid #aaa;
    background:#fff;
    display:flex;
    align-items:center;
    justify-content:center;
}
.scroll-tabs button::before{
    content:"";
    border:3px solid transparent;
}
.scroll-tabs .left::before{
    border-right:4px solid #111;
    border-left:none;
}
.scroll-tabs .right::before{
    border-left:4px solid #111;
    border-right:none;
}
.phead{
    height:63px;
    margin-right:2px;
    padding:6px 11px 0 7px;
    border-bottom:1px solid #999;
}
.ptitle{
    display:flex;
    align-items:center;
    gap:3px;
}
.ptitle .help{
    width:16px;
    height:16px;
    margin-left:auto;
}
h1,h2{
    margin:0;
    font-size:11px;
    line-height:13px;
    font-weight:600;
    color:#333;
    white-space:nowrap;
}
h1{
    font-weight:bold;
    color:#222;
}
.okcancel{
    display:flex;
    gap:15px;
    padding-left:1px;
    margin-top:11px;
}
.pbody{
    flex:1;
    min-height:0;
    display:flex;
    padding:2px 5px 2px 5px;
}
.sections{
    flex:1;
    overflow:hidden;
}
section{
    width:200px;
    padding:7px 0 11px 5px;
    border-bottom:1px solid #aaa;
}
h2{
    display:flex;
    align-items:center;
    margin:0 0 8px -1px;
    color:#555;
}
.up{
    width:8px;
    height:8px;
    border:2px solid #888;
    border-width:2px 0 0 2px;
    transform:rotate(45deg);
    flex:none;
}
h2 .up{
    margin:3px 4px 0 auto;
}
.sbar .down{
    transform:rotate(225deg);
}
.coord h2{
    margin-bottom:7px;
}
.field{
    display:flex;
    padding-left:28px;
    height:32px;
}
.field label{
    width:79px;
}
.field input{
    margin-top:5px;
}
.field + .field label{
    padding-top:5px;
}
.field input,.row input{
    width:74px;
    height:20px;
    padding:0 5px;
    border:1px solid #666;
    border-radius:0;
    background:#fff;
    outline:none;
}
.field input{
    background:#d6dade;
    box-shadow:inset 0 0 0 1px #fff;
}
.field input:disabled{
    color:#777;
    border-color:#bbb;
}
.check{
    display:flex;
    align-items:center;
    padding-left:56px;
    gap:3px;
}
.check input{
    appearance:none;
    width:13px;
    height:13px;
    margin:0;
    border:1px solid #222;
    background:#fff;
}
.btn{
    width:96px;
    height:34px;
    flex:none;
    border:1px solid #aaa;
    background:#e1e1e1;
    white-space:nowrap;
}
.edit{
    display:block;
    width:75px;
    margin:11px 0 0 75px;
    background:#ccc;
    border-color:#bbb;
    color:#888;
}
.row{
    display:flex;
    align-items:center;
    gap:16px;
    margin-bottom:12px;
}
.row:nth-of-type(even){
    margin-bottom:11px;
}
.row:last-child{
    margin-bottom:0;
}
.row .sel{
    border-color:#0078d7;
}
.sel::selection{
    background:#0078d7;
    color:#fff;
}
.sbar{
    width:16px;
    background:#f0f0f0;
    display:flex;
    flex-direction:column;
    align-items:center;
    padding:6px 0 3px;
}
.sbar .up{
    border-color:#555;
    margin-bottom:3px;
}
.sbar .down{
    margin:auto 0 6px;
}
.thumb{
    width:16px;
    flex:0 0 73%;
    background:#cdcdcd;
}

/* graphics area */
.view{
    flex:1;
    position:relative;
    background:#c4c8d3;
}
.scene{
    width:100%;
    height:100%;
    display:block;
}
.axis{
    font-size:9px;
    font-weight:bold;
    text-anchor:middle;
}
.viewbar,.docwin{
    position:absolute;
    top:5px;
    display:flex;
    align-items:center;
}
.viewbar{
    left:40%;
    margin-left:-8px;
    gap:6px;
}
.viewbar .menu + .caret{
    border-top-color:#888b93;
    margin:0 2px 0 0;
}
.docwin{
    right:9px;
    gap:6px;
    color:#7c7f87;
}
.tree{
    position:absolute;
    top:27px;
    left:5px;
    display:flex;
    align-items:center;
    gap:3px;
    font-family:"Open Sans",sans-serif;
    font-size:12px;
    white-space:pre;
}
.tri{
    border:4px solid transparent;
    border-left:5px solid #333;
    border-right:none;
    margin-right:9px;
}
.taskpane{
    position:absolute;
    top:50px;
    right:0;
    width:26px;
    border:1px solid #888;
    border-right:none;
    background:#d4d4d4;
}
.taskpane button{
    width:25px;
    height:24px;
    display:flex;
    align-items:center;
    justify-content:center;
    border-bottom:1px solid #888;
}
.taskpane button:last-child{
    border:none;
}
.taskpane .on{
    background:#f7f7f7;
}
.flap{
    position:absolute;
    left:-1px;
    top:424px;
    width:9px;
    height:39px;
    background:#f7f7f7;
    border:1px solid #888;
    border-left:none;
    display:flex;
    align-items:center;
    justify-content:center;
}
.view-name{
    position:absolute;
    left:13px;
    bottom:1px;
    font:bold 12px "Liberation Serif",serif;
    color:#000;
}
.marker{
    position:absolute;
    left:0;
    top:323px;
    width:300px;
    height:170px;
    overflow:visible;
    pointer-events:none;
    z-index:4;
}

/* model tabs and status line */
.sheets{
    height:16px;
    flex:none;
    display:flex;
    border:1px solid #888;
    border-width:1px 0;
}
.sheets > button{
    border-right:1px solid #888;
    background:#d4d4d4;
    color:#222;
    line-height:12px;
    white-space:nowrap;
}
.nav{
    width:67px;
    display:flex;
    padding-left:2px;
    background:#9db4b8;
}
.nav button{
    width:16px;
    background:#aaa;
    border:1px solid #999;
    color:#888;
    font-size:8px;
    line-height:8px;
}
.sheets > .on{
    width:68px;
    background:#fff;
    color:#111;
    font-weight:bold;
}
.s2{width:126px;}
.s3{width:181px;}
.status{
    height:18px;
    flex:none;
    display:flex;
    align-items:center;
    padding:0 1px 0 2px;
}
.status .ic{
    width:18px;
    height:18px;
}
.st1{
    margin-left:auto;
}
.st2{
    margin-left:18px;
    margin-right:118px;
}
.st3{
    color:#aaa;
    margin-right:18px;
}
.rise{
    transform:rotate(180deg);
    border-top-color:#888;
    margin-right:27px;
}

/* taskbar */
.taskbar{
    height:40px;
    flex:none;
    display:flex;
    background:linear-gradient(90deg,#23373f 0,#20353f 60%,#1a2742 95%);
    color:#fff;
}
.taskbar > button{
    width:48px;
    display:flex;
    align-items:center;
    justify-content:center;
}
.taskbar > .view-btn{
    margin-right:3px;
}
.taskbar > .run{
    position:relative;
    margin-left:1px;
}
.run::after{
    content:"";
    position:absolute;
    left:4px;
    right:4px;
    bottom:0;
    height:2px;
    background:#76b9ed;
}
.run.cur{
    background:#4d636b;
}
.run.cur::after{
    left:0;
    right:0;
}
.sw{
    font-size:10px;
    font-weight:bold;
    fill:#fff;
}
.yr{
    font-size:8px;
    font-weight:bold;
    fill:#fff;
}
.tray{
    margin-left:auto;
    display:flex;
    align-items:center;
    gap:4px;
    padding-right:4px;
}
.lang{
    margin-left:6px;
    font-size:11px;
}
.clock{
    width:66px;
    margin:0 6px 0 4px;
    text-align:center;
    line-height:19px;
}
.notes{
    margin-right:7px;
    font-size:10px;
    font-weight:bold;
    fill:#fff;
}
.tray::after{
    content:"";
    align-self:stretch;
    border-left:1px solid #667;
}
```
